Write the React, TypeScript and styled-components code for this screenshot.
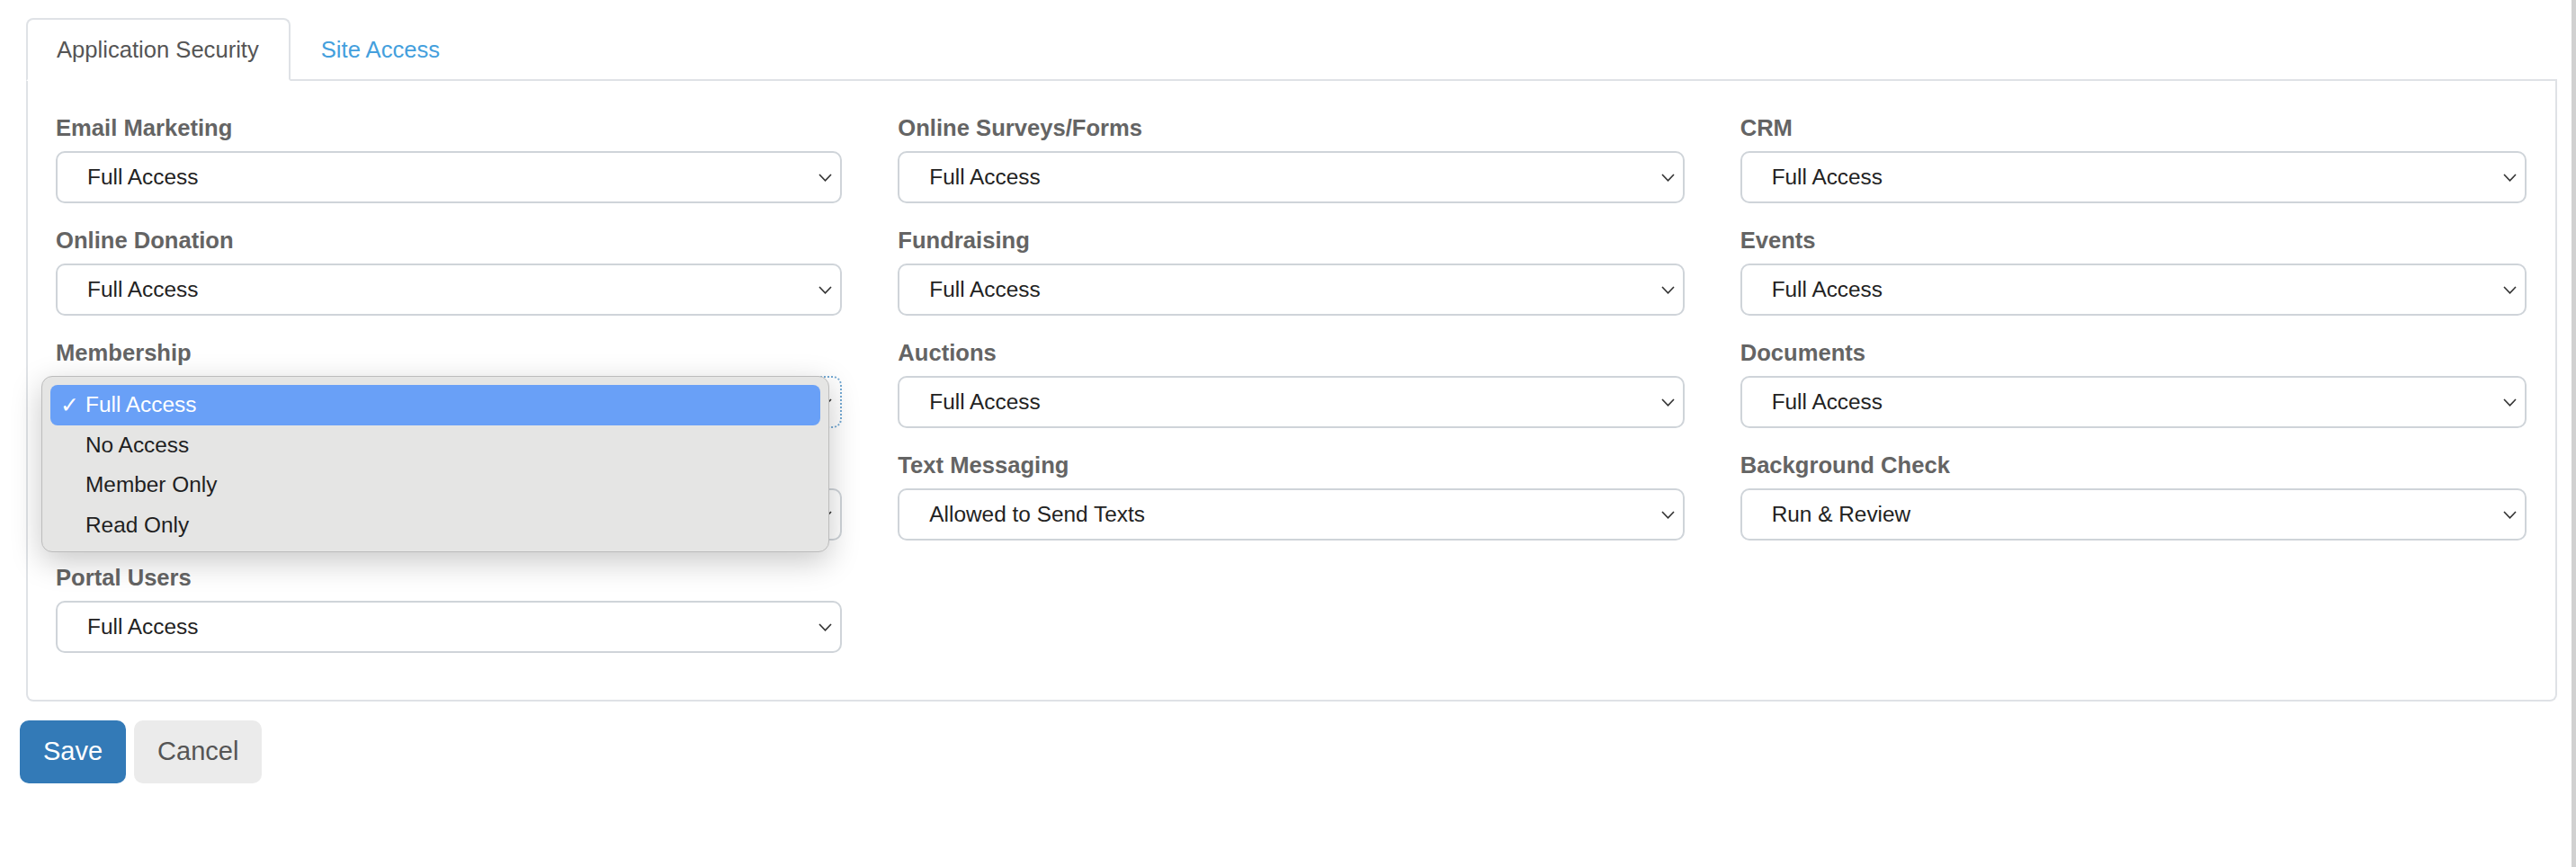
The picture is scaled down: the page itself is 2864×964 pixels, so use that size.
import React from 'react';
import styled, {createGlobalStyle, css} from 'styled-components';

const GlobalStyle = createGlobalStyle`
    html, body {
        margin: 0;
        padding: 0;
        background: #fff;
    }
    body {
        font-family: "Liberation Sans", Arial, Helvetica, sans-serif;
    }
    * {
        box-sizing: border-box;
    }
`;

const Shell = styled.div`
    display: flex;
    min-height: 100vh;
`;

const Page = styled.main`
    flex: 1;
    min-width: 0;
    padding: 20px 0 0 22px;
`;

const ScrollEdge = styled.div`
    width: 5px;
    background: #d1d1d1;
`;

const Tabs = styled.section`
    margin: 0 16px 0 7px;
`;

const TabList = styled.nav`
    display: flex;
    height: 70px;
    border-bottom: 2px solid #dfe2e6;
`;

const Tab = styled.div<{$active?: boolean}>`
    display: flex;
    align-items: center;
    height: 70px;
    margin-bottom: -2px;
    padding: 0 33px 0 32px;
    border: 2px solid transparent;
    border-radius: 8px 8px 0 0;
    font-size: 25.6px;
    color: #449fdd;
    cursor: pointer;

    ${({$active}) =>
        $active &&
        css`
            border-color: #dfe2e6 #dfe2e6 #fff;
            background: #fff;
            color: #555;
        `}
`;

const Panel = styled.div`
    border: 2px solid #dfe2e6;
    border-top: none;
    border-radius: 0 0 8px 8px;
    padding: 34px 32px 29px 31px;
`;

const FieldGrid = styled.div`
    display: grid;
    grid-template-columns: repeat(3, minmax(0, 1fr));
    column-gap: 62px;
`;

const Field = styled.div<{$raised?: boolean}>`
    position: relative;
    margin-bottom: 22.8px;
    z-index: ${({$raised}) => ($raised ? 5 : 'auto')};
`;

const Label = styled.label`
    display: block;
    margin-bottom: 7.6px;
    font-size: 25.6px;
    line-height: 36.6px;
    font-weight: 700;
    color: #646464;
`;

const SelectWrap = styled.div`
    position: relative;
`;

const SelectBox = styled.div<{$focused?: boolean}>`
    display: flex;
    align-items: center;
    justify-content: space-between;
    height: 58px;
    padding: 0 9px 0 33px;
    border: 2px solid #cfd4d9;
    border-radius: 10px;
    background: #fff;
    font-size: 24.4px;
    color: #222;

    ${({$focused}) =>
        $focused &&
        css`
            border: 2px dotted #74a9d3;
        `}
`;

const Chevron = styled.svg`
    flex: none;
    width: 15px;
    height: 9px;
`;

const Menu = styled.ul`
    position: absolute;
    top: 0;
    left: -16px;
    width: 876px;
    margin: 0;
    padding: 9px 9px 7px;
    list-style: none;
    background: #e5e5e4;
    border: 1px solid #bcbcbc;
    border-radius: 12px;
    box-shadow: 0 10px 34px rgba(0, 0, 0, 0.22);
`;

const MenuItem = styled.li<{$selected?: boolean}>`
    display: flex;
    align-items: center;
    height: 44.5px;
    padding-left: 11px;
    border-radius: 8px;
    font-size: 24.4px;
    color: #1f1f1f;

    ${({$selected}) =>
        $selected &&
        css`
            background: #69a0f7;
            color: #fff;
        `}
`;

const Check = styled.span`
    width: 28px;
    font-family: "DejaVu Sans", sans-serif;
    font-size: 25px;
    font-weight: 700;
`;

const Actions = styled.div`
    display: flex;
    gap: 9px;
    margin-top: 21px;
`;

const Button = styled.button<{$primary?: boolean}>`
    height: 70px;
    padding: 0 26px;
    border: none;
    border-radius: 10px;
    font-family: inherit;
    font-size: 29px;
    background: ${({$primary}) => ($primary ? '#337ab7' : '#ebebeb')};
    color: ${({$primary}) => ($primary ? '#fff' : '#555')};
    cursor: pointer;
`;

type FieldDef = {
    label: string;
    value: string;
    open?: boolean;
};

const fields: FieldDef[] = [
    {label: 'Email Marketing', value: 'Full Access'},
    {label: 'Online Surveys/Forms', value: 'Full Access'},
    {label: 'CRM', value: 'Full Access'},
    {label: 'Online Donation', value: 'Full Access'},
    {label: 'Fundraising', value: 'Full Access'},
    {label: 'Events', value: 'Full Access'},
    {label: 'Membership', value: 'Full Access', open: true},
    {label: 'Auctions', value: 'Full Access'},
    {label: 'Documents', value: 'Full Access'},
    {label: 'Volunteers', value: 'Full Access'},
    {label: 'Text Messaging', value: 'Allowed to Send Texts'},
    {label: 'Background Check', value: 'Run & Review'},
    {label: 'Portal Users', value: 'Full Access'},
];

const membershipOptions = ['Full Access', 'No Access', 'Member Only', 'Read Only'];

const ChevronIcon = () => (
    <Chevron viewBox="0 0 15 9">
        <polyline points="1,1 7.5,7.8 14,1" fill="none" stroke="#333" strokeWidth="1.6" />
    </Chevron>
);

const SecurityField = ({label, value, open}: FieldDef) => (
    <Field $raised={open}>
        <Label>{label}</Label>
        <SelectWrap>
            <SelectBox $focused={open}>
                <span>{value}</span>
                <ChevronIcon />
            </SelectBox>
            {open && (
                <Menu>
                    {membershipOptions.map((option) => (
                        <MenuItem key={option} $selected={option === value}>
                            <Check>{option === value ? '✓' : ''}</Check>
                            {option}
                        </MenuItem>
                    ))}
                </Menu>
            )}
        </SelectWrap>
    </Field>
);

export default function App() {
    return (
        <>
            <GlobalStyle />
            <Shell>
                <Page>
                    <Tabs>
                        <TabList>
                            <Tab $active>Application Security</Tab>
                            <Tab>Site Access</Tab>
                        </TabList>
                        <Panel>
                            <FieldGrid>
                                {fields.map((field) => (
                                    <SecurityField key={field.label} {...field} />
                                ))}
                            </FieldGrid>
                        </Panel>
                    </Tabs>
                    <Actions>
                        <Button $primary>Save</Button>
                        <Button>Cancel</Button>
                    </Actions>
                </Page>
                <ScrollEdge />
            </Shell>
        </>
    );
}
